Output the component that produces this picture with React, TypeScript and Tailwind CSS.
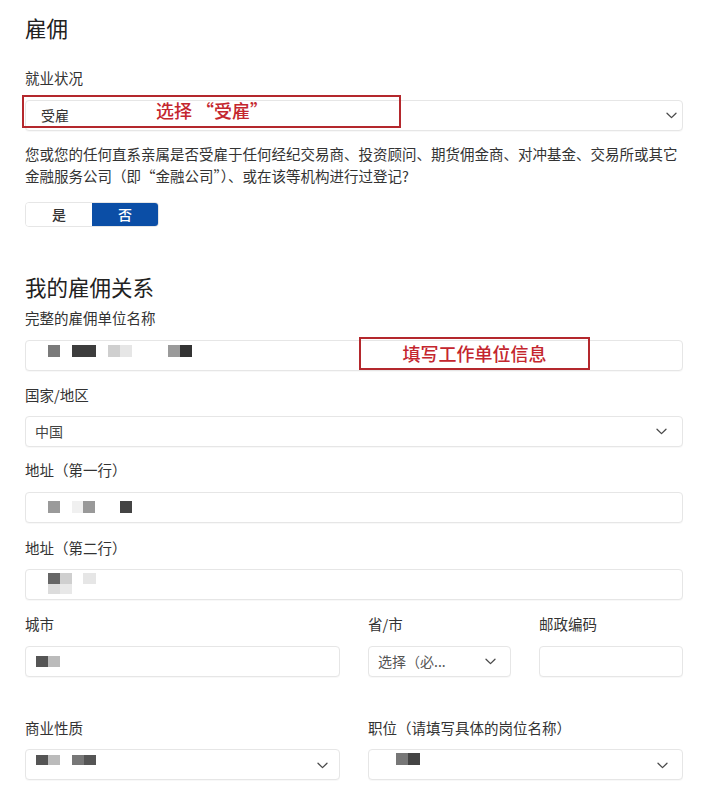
import React from 'react';

const Chevron = () => (
  <svg width="11" height="7" viewBox="0 0 11 7" fill="none" className="shrink-0">
    <path d="M1 1.2L5.5 5.6L10 1.2" stroke="#4a4a4a" strokeWidth="1.3" strokeLinecap="round" strokeLinejoin="round" />
  </svg>
);

const Label = ({ children, className = '' }: { children: React.ReactNode; className?: string }) => (
  <div className={'text-[14.5px] leading-[20px] text-[#333] ' + className}>{children}</div>
);

const Box = ({ children, className = '' }: { children?: React.ReactNode; className?: string }) => (
  <div className={'h-[31px] rounded-[4px] border border-[#e6e6e6] bg-white shadow-[0_1px_1px_rgba(0,0,0,0.03)] ' + className}>
    {children}
  </div>
);

const App = () => {
  return (
    <div className="w-[720px] min-h-[797px] bg-white pl-[25px] pr-[37px] font-['Noto_Sans_CJK_SC','Noto_Sans',sans-serif] text-[#333]">
      <h1 className="pt-[13px] text-[21.5px] leading-[30px] text-[#222]">雇佣</h1>

      <Label className="mt-[25px]">就业状况</Label>
      <div className="relative mt-[12px]">
        <Box className="flex items-center justify-between pl-[15px] pr-[5px]">
          <span className="text-[14px] text-[#333]">受雇</span>
          <Chevron />
        </Box>
        <div className="absolute left-[-3px] top-[-5px] h-[33px] w-[379px] border-2 border-[#b4282d]" />
        <div className="absolute left-[131px] top-[-2px] text-[18px] leading-[24px] font-medium text-[#c4262e]">
          选择 “受雇”
        </div>
      </div>

      <p className="mt-[12px] text-[14.5px] leading-[22px] text-[#333]">
        您或您的任何直系亲属是否受雇于任何经纪交易商、投资顾问、期货佣金商、对冲基金、交易所或其它金融服务公司（即“金融公司”）、或在该等机构进行过登记?
      </p>

      <div className="mt-[15px] flex h-[25px] w-[134px] overflow-hidden rounded-[4px] border border-[#e6e6e6] text-[14px] font-medium">
        <div className="flex flex-1 items-center justify-center bg-white text-[#333]">是</div>
        <div className="flex flex-1 items-center justify-center bg-[#0b4ea6] text-white">否</div>
      </div>

      <h2 className="mt-[45px] text-[21.5px] leading-[30px] text-[#222]">我的雇佣关系</h2>

      <Label className="mt-[6px]">完整的雇佣单位名称</Label>
      <div className="relative mt-[12px]">
        <Box className="flex items-start pt-[4px]">
          <span className="ml-[22px] h-3 w-3 bg-[#7a7a7a]" />
          <span className="ml-3 h-3 w-6 bg-[#3d3d3d]" />
          <span className="ml-3 h-3 w-3 bg-[#cfcfcf]" />
          <span className="h-3 w-3 bg-[#e6e6e6]" />
          <span className="ml-9 h-3 w-3 bg-[#9a9a9a]" />
          <span className="h-3 w-3 bg-[#333]" />
        </Box>
        <div className="absolute left-[334px] top-[-3px] flex h-[33px] w-[231px] items-center justify-center border-2 border-[#b4282d] text-[18px] font-medium text-[#c4262e]">
          填写工作单位信息
        </div>
      </div>

      <Label className="mt-[14px]">国家/地区</Label>
      <Box className="mt-[11px] flex items-center justify-between pl-[9px] pr-[15px]">
        <span className="text-[14px] text-[#444]">中国</span>
        <Chevron />
      </Box>

      <Label className="mt-[13px]">地址（第一行）</Label>
      <Box className="mt-[12px] flex items-start pt-[8px]">
        <span className="ml-[22px] h-3 w-3 bg-[#9a9a9a]" />
        <span className="ml-3 h-3 w-[11px] bg-[#f0f0f0]" />
        <span className="h-3 w-3 bg-[#999]" />
        <span className="ml-[25px] h-3 w-3 bg-[#444]" />
      </Box>

      <Label className="mt-[15px]">地址（第二行）</Label>
      <Box className="mt-[11px] flex items-start pt-[3px]">
        <div className="ml-[22px] flex flex-col">
          <div className="flex">
            <span className="h-[11px] w-3 bg-[#666]" />
            <span className="h-[11px] w-3 bg-[#cfcfcf]" />
          </div>
          <div className="flex">
            <span className="h-[10px] w-3 bg-[#dcdcdc]" />
            <span className="h-[10px] w-3 bg-[#e8e8e8]" />
          </div>
        </div>
        <span className="ml-[11px] h-[11px] w-[13px] bg-[#e6e6e6]" />
      </Box>

      <div className="mt-[14px] grid grid-cols-[315px_143px_144px] gap-x-[28px]">
        <Label>城市</Label>
        <Label>省/市</Label>
        <Label>邮政编码</Label>
        <Box className="mt-[12px] flex items-start pt-[9px]">
          <span className="ml-[10px] h-[11px] w-3 bg-[#555]" />
          <span className="h-[11px] w-3 bg-[#bbb]" />
        </Box>
        <Box className="mt-[12px] flex items-center justify-between pl-[9px] pr-[14px]">
          <span className="text-[14px] text-[#555]">选择（必...</span>
          <Chevron />
        </Box>
        <Box className="mt-[12px]" />
      </div>

      <div className="mt-[41px] grid grid-cols-2 gap-x-[28px]">
        <Label>商业性质</Label>
        <Label>职位（请填写具体的岗位名称）</Label>
        <Box className="mt-[11px] flex items-start justify-between pr-[11px]">
          <div className="flex pt-[5px]">
            <span className="ml-[10px] h-[10px] w-3 bg-[#555]" />
            <span className="h-[10px] w-3 bg-[#bbb]" />
            <span className="ml-3 h-[10px] w-3 bg-[#777]" />
            <span className="h-[10px] w-3 bg-[#555]" />
          </div>
          <div className="self-center pt-[2px]">
            <Chevron />
          </div>
        </Box>
        <Box className="mt-[11px] flex items-start justify-between pr-[14px]">
          <div className="flex pt-[3px]">
            <span className="ml-[27px] h-3 w-3 bg-[#777]" />
            <span className="h-3 w-3 bg-[#444]" />
          </div>
          <div className="self-center pt-[2px]">
            <Chevron />
          </div>
        </Box>
      </div>
    </div>
  );
};

export default App;
